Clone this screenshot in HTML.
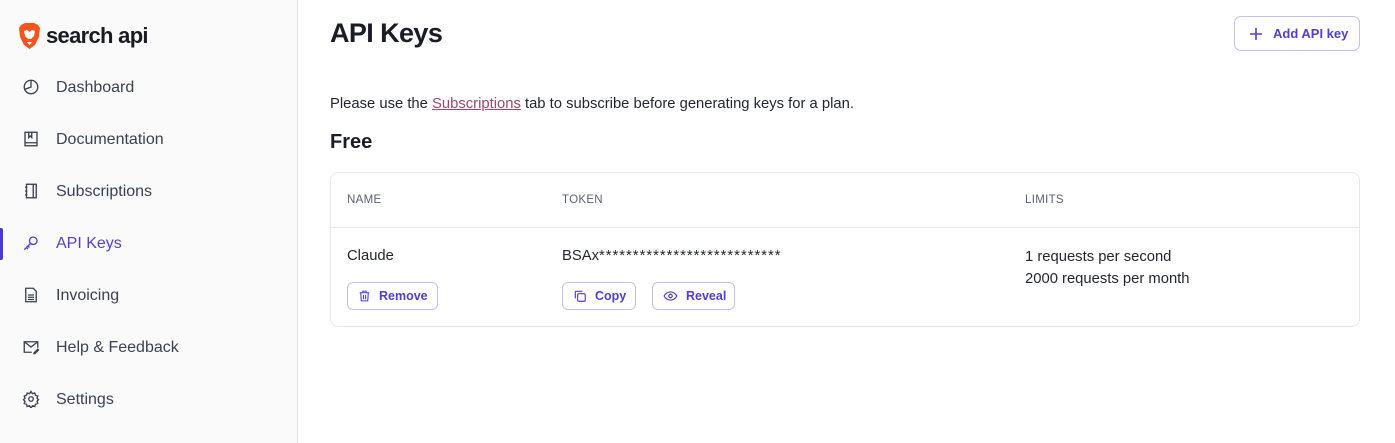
<!DOCTYPE html>
<html><head><style>
*{box-sizing:border-box;margin:0;padding:0}
body{width:1395px;height:443px;overflow:hidden;font-family:"Liberation Sans",sans-serif;background:#fff;position:relative;color:#1f2330}
.side{position:absolute;left:0;top:0;width:298px;height:443px;background:#fafafa;border-right:1px solid #e3e4e8}
.logo{position:absolute;left:18px;top:22px;display:flex;align-items:center}
.logo span{font-size:22px;font-weight:bold;color:#1b1c22;margin-left:5px;letter-spacing:-0.7px}
.nav{position:absolute;left:0;width:298px;height:30px;display:flex;align-items:center;font-size:16px;color:#3a4150}
.nav svg{position:absolute;left:22px;top:5px}
.nav span{position:absolute;left:56px}
.nav.act{color:#4f3fd6}
.nav.act:before{content:"";position:absolute;left:0;top:-1px;width:3px;height:32px;background:#4b3ad8;border-radius:0 2px 2px 0}
h1{position:absolute;left:330px;top:18px;font-size:27px;font-weight:bold;color:#1b1d26;letter-spacing:-0.6px}
.add{position:absolute;left:1234px;top:16px;width:126px;height:35px;border:1px solid #c3bff5;border-radius:7px;color:#4f3fd6;font-size:13px;font-weight:bold;display:flex;align-items:center;padding-left:14px}
.add svg{margin-right:10px}
.note{position:absolute;left:330px;top:96px;font-size:14.8px;color:#23262f}
.note a{color:#a0476f;text-decoration:underline}
h2{position:absolute;left:330px;top:131px;font-size:20px;font-weight:bold;color:#1b1d26}
.card{position:absolute;left:330px;top:172px;width:1030px;height:155px;border:1px solid #e6e7eb;border-radius:8px}
.hd{position:absolute;top:194px;font-size:11.5px;color:#5d6270;letter-spacing:.3px}
.line{position:absolute;left:331px;top:227px;width:1028px;height:1px;background:#e6e7eb}
.t{position:absolute;font-size:14.8px;color:#23262f}
.btn{position:absolute;top:282px;height:28px;border:1px solid #c3bff5;border-radius:6px;color:#4f3fd6;font-size:12.5px;font-weight:bold;display:flex;align-items:center;padding-left:10px}
.btn svg{margin-right:8px}
</style></head><body>
<div class="side">
 <div class="logo">
  <svg width="23" height="28" viewBox="0 0 23 28"><path d="M3 3 L7 1 H16 L20 3 L22 6 L21 15 L17 23 L11.5 27 L6 23 L2 15 L1 6Z" fill="#f2561d"/><path d="M6 9 L9 8 L11.5 10 L14 8 L17 9 L16 14 L13 17 H10 L7 14Z" fill="#fff"/><path d="M9 20 H14 L11.5 23Z" fill="#fff"/></svg>
  <span>search api</span>
 </div>
 <div class="nav" style="top:73px"><svg width="18" height="18" viewBox="0 0 24 24" fill="none" stroke="#3a4150" stroke-width="1.8"><circle cx="12" cy="12" r="9"/><path d="M12 3v9l-8 3"/></svg><span>Dashboard</span></div>
 <div class="nav" style="top:125px"><svg width="18" height="18" viewBox="0 0 24 24" fill="none" stroke="#3a4150" stroke-width="1.8"><rect x="4" y="3" width="16" height="18"/><path d="M4 17h16M9 3v7l2-2 2 2V3"/></svg><span>Documentation</span></div>
 <div class="nav" style="top:177px"><svg width="18" height="18" viewBox="0 0 24 24" fill="none" stroke="#3a4150" stroke-width="1.8"><rect x="6" y="3" width="13" height="18"/><path d="M4 7h3M4 12h3M4 17h3M15 3v18"/></svg><span>Subscriptions</span></div>
 <div class="nav act" style="top:229px"><svg width="18" height="18" viewBox="0 0 24 24" fill="none" stroke="#4f3fd6" stroke-width="1.8"><circle cx="15" cy="9" r="5"/><path d="M11.5 12.5 L3 21 M6 18l2 2M8 16l2 2"/></svg><span>API Keys</span></div>
 <div class="nav" style="top:281px"><svg width="18" height="18" viewBox="0 0 24 24" fill="none" stroke="#3a4150" stroke-width="1.8"><path d="M5 3h10l4 4v14H5z"/><path d="M8 12h8M8 15h8M8 18h8"/></svg><span>Invoicing</span></div>
 <div class="nav" style="top:333px"><svg width="18" height="18" viewBox="0 0 24 24" fill="none" stroke="#3a4150" stroke-width="1.8"><path d="M13 19H3V5h18v8"/><path d="M3 5l9 7 9-7M16 20l5-5 1 1-5 5h-1z"/></svg><span>Help &amp; Feedback</span></div>
 <div class="nav" style="top:385px"><svg width="18" height="18" viewBox="0 0 24 24" fill="none" stroke="#3a4150" stroke-width="1.8"><circle cx="12" cy="12" r="3"/><path d="M12 2l2 3 3-1 1 3 3 1-1 3 2 2-2 2 1 3-3 1-1 3-3-1-2 3-2-3-3 1-1-3-3-1 1-3-2-2 2-2-1-3 3-1 1-3 3 1z"/></svg><span>Settings</span></div>
</div>
<h1>API Keys</h1>
<div class="add"><svg width="14" height="14" viewBox="0 0 14 14" stroke="#4f3fd6" stroke-width="1.6"><path d="M7 1v12M1 7h12"/></svg>Add API key</div>
<div class="note">Please use the <a>Subscriptions</a> tab to subscribe before generating keys for a plan.</div>
<h2>Free</h2>
<div class="card"></div>
<div class="hd" style="left:347px">NAME</div>
<div class="hd" style="left:562px">TOKEN</div>
<div class="hd" style="left:1025px">LIMITS</div>
<div class="line"></div>
<div class="t" style="left:347px;top:248px">Claude</div>
<div class="t" style="left:562px;top:248px">BSAx<span style="letter-spacing:1px">***************************</span></div>
<div class="t" style="left:1025px;top:246px;line-height:22px">1 requests per second<br>2000 requests per month</div>
<div class="btn" style="left:347px;width:91px"><svg width="13" height="14" viewBox="0 0 24 24" fill="none" stroke="#4f3fd6" stroke-width="2"><path d="M3 6h18M9 6V3h6v3M5 6l1 15h12l1-15M10 10v8M14 10v8"/></svg>Remove</div>
<div class="btn" style="left:562px;width:74px"><svg width="14" height="14" viewBox="0 0 24 24" fill="none" stroke="#4f3fd6" stroke-width="2"><rect x="8" y="8" width="13" height="13" rx="2"/><path d="M16 4H5a1 1 0 0 0-1 1v11"/></svg>Copy</div>
<div class="btn" style="left:652px;width:83px"><svg width="15" height="14" viewBox="0 0 24 24" fill="none" stroke="#4f3fd6" stroke-width="2"><path d="M1 12s4-7 11-7 11 7 11 7-4 7-11 7S1 12 1 12z"/><circle cx="12" cy="12" r="3"/></svg>Reveal</div>
</body></html>
